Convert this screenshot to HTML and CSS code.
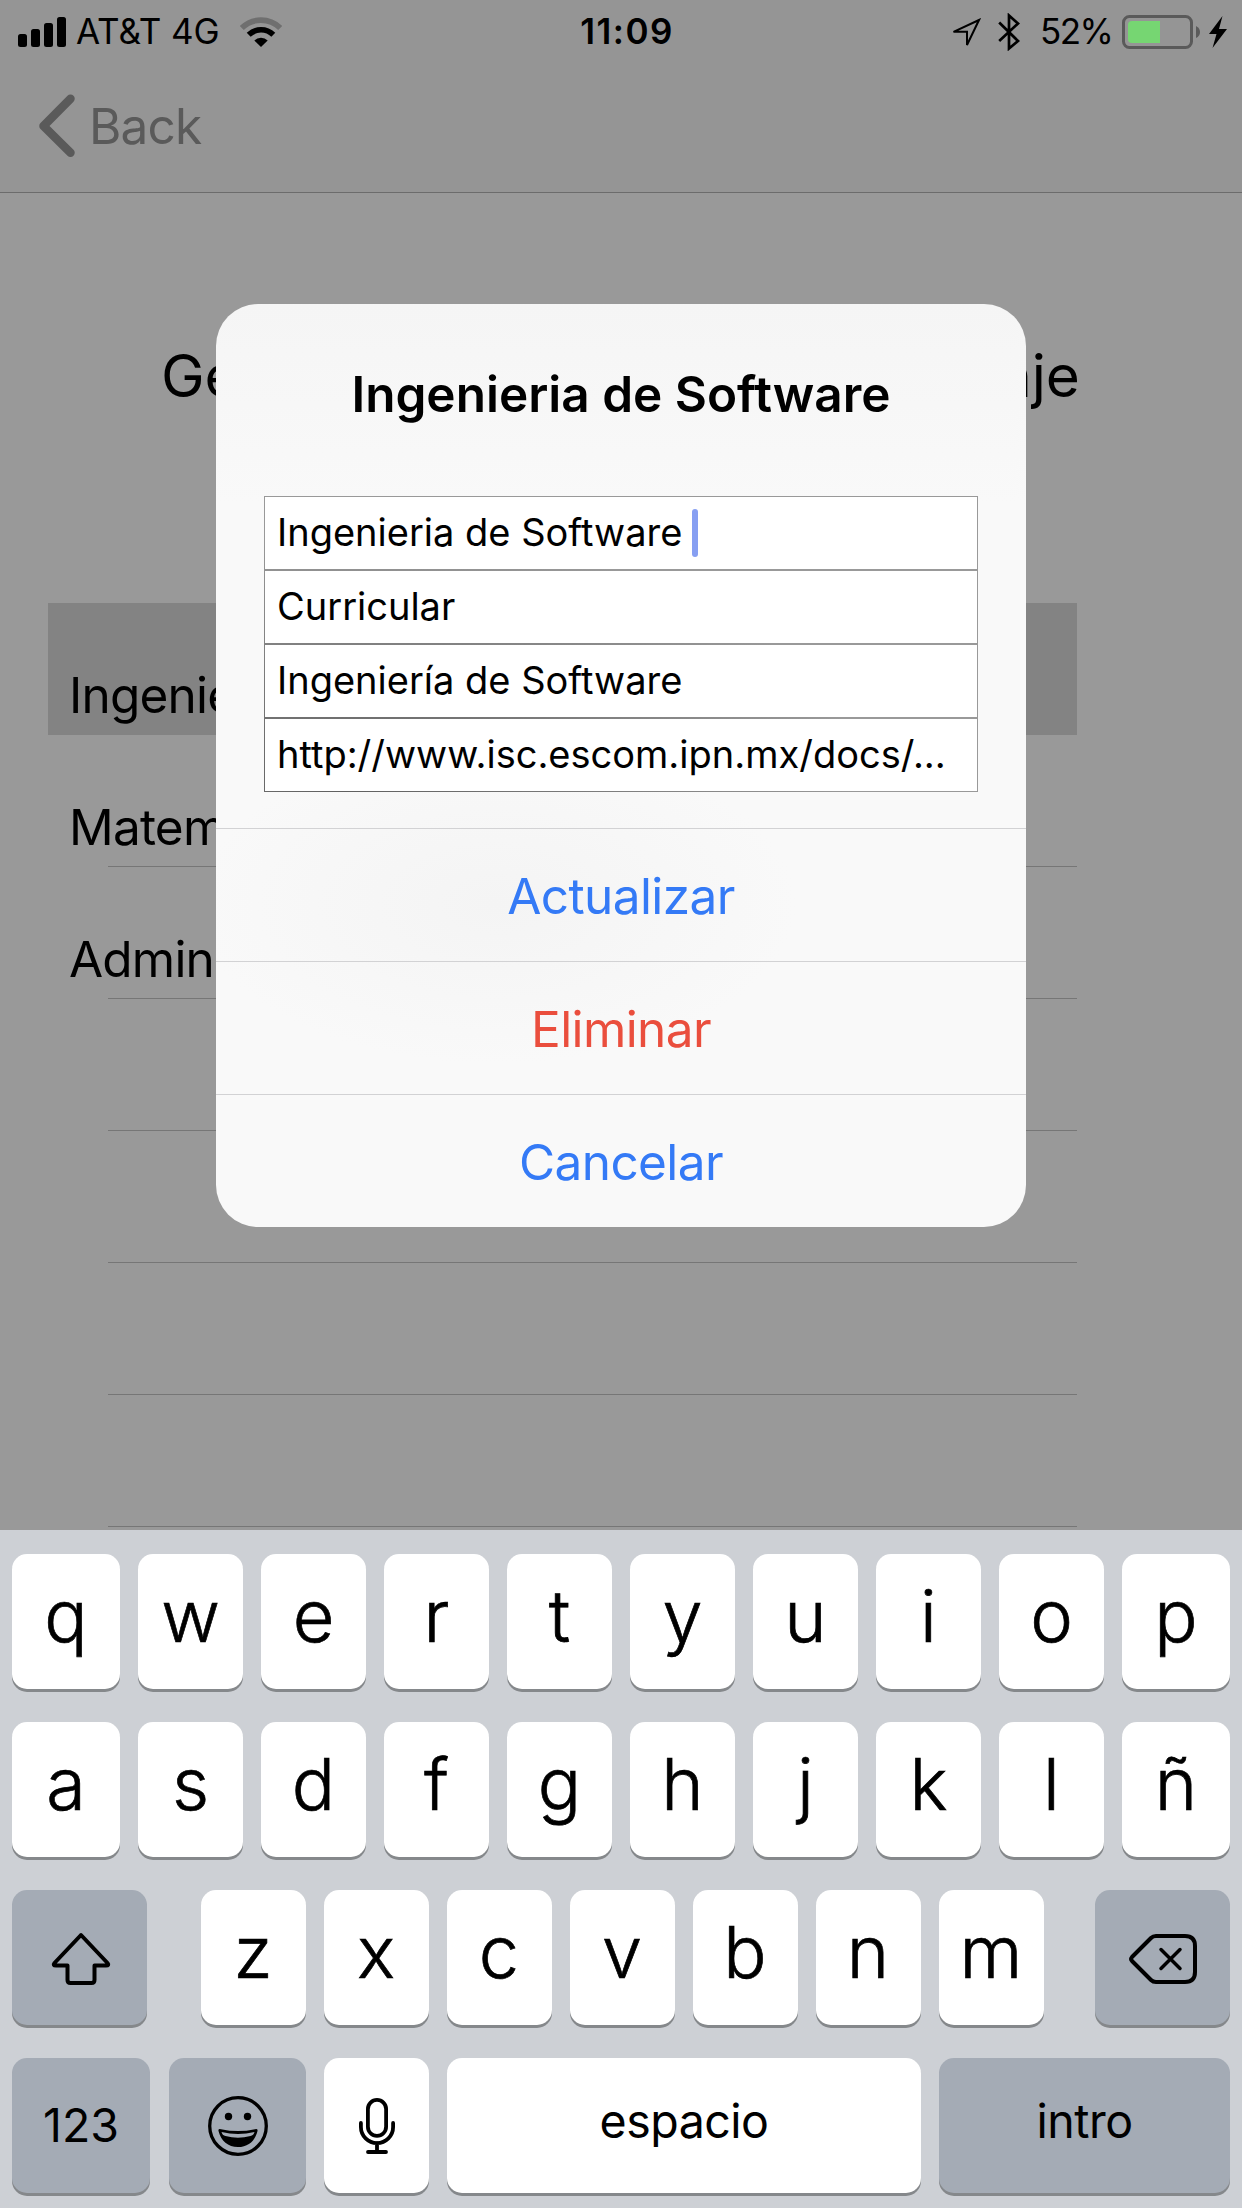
FILE: index.html
```html
<!DOCTYPE html>
<html lang="es">
<head>
<meta charset="utf-8">
<title>Unidades de Aprendizaje</title>
<link rel="stylesheet" href="styles.css">
</head>
<body>
<div class="screen">
  <header class="top">
    <div class="status">
      <div class="status-left">
        <svg class="signal" width="48" height="30" viewBox="0 0 48 30"><rect x="0" y="17" width="9" height="13" rx="2.5"/><rect x="13" y="12" width="9" height="18" rx="2.5"/><rect x="26" y="6" width="9" height="24" rx="2.5"/><rect x="39" y="0" width="9" height="30" rx="2.5"/></svg>
        <span class="carrier">AT&amp;T 4G</span>
        <svg class="wifi" width="42" height="30" viewBox="0 0 42 30" fill="none"><path d="M1.8 11A27.3 27.3 0 0 1 40.2 11" stroke="#6f6f6f" stroke-width="5.6"/><path d="M8.7 17.8A17.5 17.5 0 0 1 33.3 17.8" stroke="#000" stroke-width="5.6"/><path d="M21 30L14.3 23.6A9.5 9.5 0 0 1 27.7 23.6Z" fill="#000"/></svg>
      </div>
      <span class="time">11:09</span>
      <div class="status-right">
        <svg class="location" width="30" height="30" viewBox="0 0 30 30" fill="none" stroke="#000" stroke-width="2"><path d="M28 2L2.5 13.8H16V27Z"/></svg>
        <svg class="bluetooth" width="22" height="38" viewBox="0 0 22 38" fill="none" stroke="#000" stroke-width="2.7"><path d="M1.2 9.5L20 28 11 35.5V2.5L20 10.5 1.2 28"/></svg>
        <span class="percent">52%</span>
        <svg class="battery" width="79" height="34" viewBox="0 0 79 34"><rect x="1.5" y="1.5" width="68" height="31" rx="6" fill="none" stroke="#5a5a5a" stroke-width="3"/><path d="M38 6V28H10Q6 28 6 24V10Q6 6 10 6Z" fill="#76d672"/><path d="M74 11Q78 13 78 17T74 23Z" fill="#5a5a5a"/></svg>
        <svg class="bolt" width="18" height="32" viewBox="0 0 18 32"><path d="M13.500 0L0 18H7.500L3.500 32 18 13H10Z"/></svg>
      </div>
    </div>
    <nav class="nav">
      <svg width="38" height="64" viewBox="0 0 38 64" fill="none" stroke="#5a5a5a" stroke-width="8.500" stroke-linecap="round"><path d="M32.500 4.800L5.500 32 32.500 58.800" stroke-linejoin="round"/></svg>
      <span class="back">Back</span>
    </nav>
  </header>
  <main class="page">
    <h1 class="heading">Gestión Unidades de Aprendizaje</h1>
    <ul class="list">
      <li class="row selected">Ingenieria</li>
      <li class="row">Matematicas</li>
      <li class="row">Administracion</li>
      <li class="row"></li>
      <li class="row"></li>
      <li class="row"></li>
      <li class="row"></li>
    </ul>
  </main>
  <section class="keyboard">
    <div class="keys">
      <div class="key">q</div><div class="key">w</div><div class="key">e</div><div class="key">r</div><div class="key">t</div><div class="key">y</div><div class="key">u</div><div class="key">i</div><div class="key">o</div><div class="key">p</div>
    </div>
    <div class="keys">
      <div class="key">a</div><div class="key">s</div><div class="key">d</div><div class="key">f</div><div class="key">g</div><div class="key">h</div><div class="key">j</div><div class="key">k</div><div class="key">l</div><div class="key">ñ</div>
    </div>
    <div class="keys keys-shift">
      <div class="key dark icon">
        <svg width="60" height="54" viewBox="0 0 60 54" fill="none" stroke="#000" stroke-width="4" stroke-linejoin="round"><path d="M30 3L3.500 31Q1.500 33.500 5 33.500H16.500V48Q16.500 51 19.500 51H40.500Q43.500 51 43.500 48V33.500H55Q58.500 33.500 56.500 31Z"/></svg>
      </div>
      <div class="letters">
        <div class="key">z</div><div class="key">x</div><div class="key">c</div><div class="key">v</div><div class="key">b</div><div class="key">n</div><div class="key">m</div>
      </div>
      <div class="key dark icon">
        <svg width="68" height="50" viewBox="0 0 68 50" fill="none" stroke="#000" stroke-width="4" stroke-linecap="round" stroke-linejoin="round"><path d="M27 2H56Q66 2 66 12V38Q66 48 56 48H27Q24 48 22 46L3 27Q1.200 25 3 23L22 4Q24 2 27 2Z"/><path d="M32 15.500L51 34.500M51 15.500L32 34.500" stroke-width="3.500"/></svg>
      </div>
    </div>
    <div class="keys keys-bottom">
      <div class="key dark numbers">123</div>
      <div class="key dark icon emoji">
        <svg width="60" height="60" viewBox="0 0 60 60"><circle cx="30" cy="30" r="28.300" fill="none" stroke="#000" stroke-width="3.300"/><circle cx="20.500" cy="20.500" r="3.700"/><circle cx="39.500" cy="20.500" r="3.700"/><path d="M10.500 35Q10 32.500 13 33.200 30 37 47 33.200 50 32.500 49.500 35C47 45 40 51 30 51S13 45 10.500 35ZM13.500 36C14 38.500 15.500 39.500 17.500 40Q30 43.500 42.500 40C44.500 39.500 46 38.500 46.500 36Q30 40 13.500 36Z" fill-rule="evenodd"/></svg>
      </div>
      <div class="key icon">
        <svg width="36" height="56" viewBox="0 0 36 56" fill="none" stroke="#000" stroke-width="3.800" stroke-linecap="round"><rect x="8.900" y="1.900" width="18.200" height="36" rx="9.100"/><path d="M1.900 25V29A16.100 16.100 0 0 0 34.100 29V25M18 45V54M9 54H27"/></svg>
      </div>
      <div class="key word">espacio</div>
      <div class="key dark word">intro</div>
    </div>
  </section>
  <section class="alert">
    <h2 class="alert-title">Ingenieria de Software</h2>
    <div class="fields">
      <div class="field">Ingenieria de Software<i class="caret"></i></div>
      <div class="field">Curricular</div>
      <div class="field">Ingeniería de Software</div>
      <div class="field url">http://www.isc.escom.ipn.mx/docs/...</div>
    </div>
    <div class="action update">Actualizar</div>
    <div class="action delete">Eliminar</div>
    <div class="action cancel">Cancelar</div>
  </section>
</div>
</body>
</html>
```
FILE: styles.css
```css
* { box-sizing: border-box; }
body { margin: 0; font-family: Inter, "Liberation Sans", sans-serif; color: #000; }
h1, h2, ul { margin: 0; padding: 0; font-weight: 400; list-style: none; }
svg { display: block; flex: none; }
.screen { position: relative; width: 1242px; height: 2208px; display: flex; flex-direction: column; overflow: hidden; background: #999; }

.top { height: 193px; background: #959595; border-bottom: 1px solid #6c6c6c; }
.status { height: 60px; padding: 0 15px 0 18px; display: grid; grid-template-columns: 1fr auto 1fr; align-items: center; font-size: 35px; line-height: 63px; }
.status-left, .status-right { display: flex; align-items: center; }
.status-right { justify-content: flex-end; }
.carrier { margin-left: 10px; width: 164px; font-weight: 400; letter-spacing: -0.1px; white-space: nowrap; }
.time { margin-left: 9px; font-weight: 600; letter-spacing: 1.5px; }
.bluetooth { margin: 1px 0 0 17px; }
.location { margin-top: 2px; }
.percent { margin-left: 20px; width: 82px; font-weight: 400; letter-spacing: -1.6px; white-space: nowrap; }
.bolt { margin-left: 8px; margin-top: 1px; }
.nav { height: 132px; padding-left: 38px; display: flex; align-items: center; gap: 13px; color: #5a5a5a; }
.back { font-size: 49.5px; letter-spacing: -0.8px; }

.page { height: 1337px; padding: 145px 165px 0 48px; }
.heading { height: 265px; margin-left: 113px; font-size: 58.5px; line-height: 75px; letter-spacing: -0.1px; white-space: nowrap; }
.row { height: 132px; margin-left: 60px; padding-top: 52px; border-bottom: 1px solid #767676; font-size: 49.5px; line-height: 80px; letter-spacing: -0.8px; white-space: nowrap; text-indent: -39px; }
.selected { margin-left: 0; padding-left: 60px; background: #838383; border-bottom: 0; }

.keyboard { height: 678px; padding: 24px 12px 0; display: flex; flex-direction: column; gap: 33px; background: #cdd0d5; }
.keys { height: 135px; display: grid; grid-template-columns: 108px repeat(8, 105px) 108px; gap: 18px; }
.key { height: 135px; padding-bottom: 13px; display: flex; align-items: center; justify-content: center; border-radius: 15px; background: #fff; box-shadow: 0 3px 0 #85888b; font-size: 72px; font-weight: 300; -webkit-text-stroke: 0.7px #000; }
.dark { background: #a4abb5; }
.icon { padding-bottom: 0; }
.keys-shift { display: grid; grid-template-columns: 135px 843px 135px; gap: 0; justify-content: space-between; }
.keys-shift > .icon { padding: 3px 0 0 3px; }
.keys-shift > .icon:last-child { padding: 3px 0 0; }
.letters { margin: 0 -1px 0 1px; display: grid; grid-template-columns: repeat(7, 105px); gap: 18px; }
.keys-bottom { grid-template-columns: 138px 138px 105px 474px 291px; column-gap: 18px; }
.emoji { margin-left: 1px; }
.numbers { padding: 0 0 1px; font-size: 46.5px; font-weight: 400; letter-spacing: 0; -webkit-text-stroke: 0; }
.word { padding: 0 0 9px 0; font-size: 46.5px; font-weight: 400; letter-spacing: -0.5px; -webkit-text-stroke: 0; }

.alert { position: absolute; left: 216px; top: 304px; width: 810px; height: 923px; border-radius: 42px; overflow: hidden; background: radial-gradient(ellipse 300px 160px at 280px 600px, #f4f4f4, #f4f4f400), linear-gradient(#f5f5f5, #f9f9f9 200px); }
.alert-title { height: 192px; padding-top: 50px; font-size: 49.5px; font-weight: 600; line-height: 81px; letter-spacing: 0; text-align: center; }
.fields { width: 714px; height: 296px; margin: 0 auto 36px; padding: 1px; display: grid; gap: 2px; background: radial-gradient(ellipse 520px 260px at 80px 296px, #606060, #999); }
.field { height: 72px; padding: 0 0 2px 12px; display: flex; align-items: center; background: #fff; font-size: 38px; line-height: 70px; white-space: nowrap; }
.caret { width: 6px; height: 48px; margin: 2px 0 0 10px; border-radius: 3px; background: #879ff2; }
.action { height: 133px; padding-top: 2px; border-top: 1px solid #d2d2d4; font-size: 49.5px; line-height: 130px; letter-spacing: -0.6px; text-align: center; color: #347af6; }
.delete { color: #ea4e3d; }
```
